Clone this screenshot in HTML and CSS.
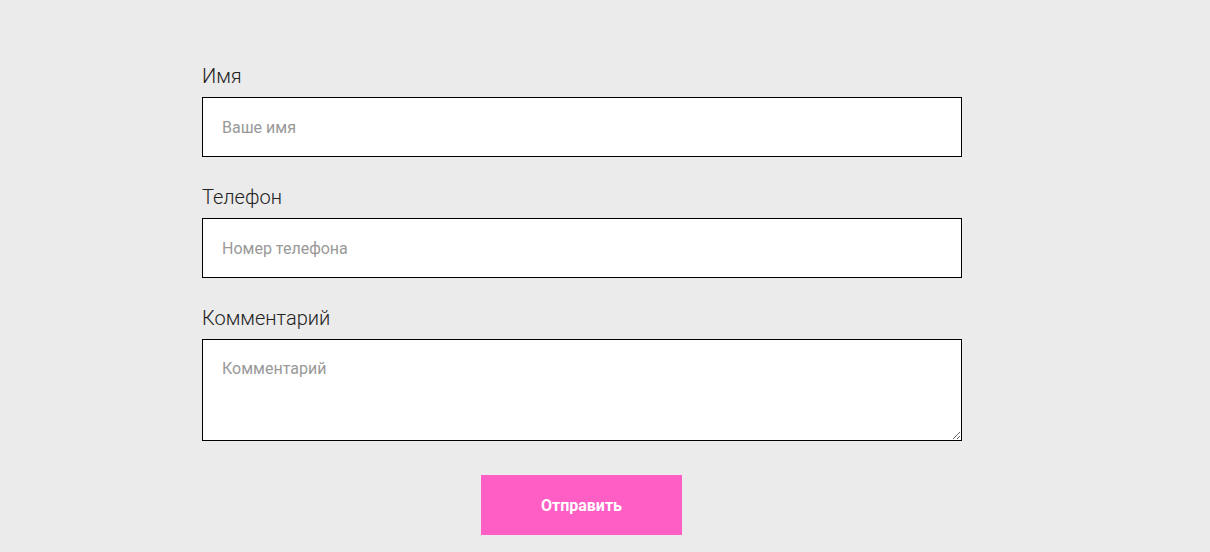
FILE: index.html
```html
<!DOCTYPE html>
<html lang="ru">
<head>
  <meta charset="UTF-8" />
  <meta name="viewport" content="width=device-width, initial-scale=1.0"/>
  <title>Обратная связь</title>
  <link rel="stylesheet" href="styles.css">
</head>
<body>

  <div class="container">
    <form class="feedback" onsubmit="return false;">
      <div class="field">
        <label for="name">Имя</label>
        <input type="text" id="name" placeholder="Ваше имя" />
      </div>
      <div class="field">
        <label for="phone">Телефон</label>
        <input type="tel" id="phone" placeholder="Номер телефона" />
      </div>
      <div class="field">
        <label for="comment">Комментарий</label>
        <textarea id="comment" placeholder="Комментарий"></textarea>
      </div>
      <div class="actions">
        <button type="submit">Отправить</button>
      </div>
    </form>
  </div>

</body>
</html>
```

FILE: styles.css
```css
* { box-sizing: border-box; }

body {
  margin: 0;
  font-family: Roboto, 'Liberation Sans', sans-serif;
  background: #ebebeb;
  color: #333;
}

.container {
  width: 806px;
  margin: 0 auto;
  padding-top: 64px;
}

.feedback {
  width: 760px;
}

.field {
  margin-bottom: 28px;
}

label {
  display: block;
  font-size: 20px;
  font-weight: 300;
  line-height: 24px;
  margin-bottom: 9px;
  color: #222;
}

input, textarea {
  display: block;
  width: 100%;
  padding: 20px 19px;
  border: 1px solid #000;
  border-radius: 0;
  background: #fff;
  font-family: inherit;
  font-size: 16px;
  line-height: 18px;
  color: #333;
  outline: none;
}

input {
  height: 60px;
}

textarea {
  height: 102px;
  resize: vertical;
}

input::placeholder, textarea::placeholder {
  color: #999;
}

.actions {
  display: flex;
  justify-content: center;
  padding-top: 6px;
  padding-right: 1px;
}

button {
  width: 201px;
  height: 60px;
  border: none;
  background: #ff5ec4;
  color: #fff;
  font-family: inherit;
  font-size: 16px;
  font-weight: bold;
  cursor: pointer;
}
```
